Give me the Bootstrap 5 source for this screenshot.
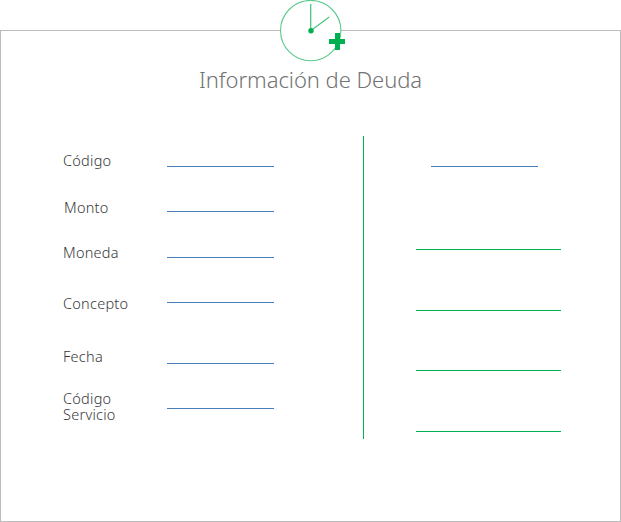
<!DOCTYPE html>
<html lang="es">
<head>
<meta charset="utf-8">
<meta name="viewport" content="width=device-width, initial-scale=1">
<title>Información de Deuda</title>
<link href="https://cdn.jsdelivr.net/npm/bootstrap@5.3.0/dist/css/bootstrap.min.css" rel="stylesheet">
<style>
body { font-family: "Noto Sans", "Open Sans", sans-serif; background: #fff; overflow: hidden; }
.page { width: 621px; height: 522px; padding-top: 30px; }
.panel { height: 492px; border: 1px solid #bcbcbc; }
.clock { top: -31px; left: 274px; }
.panel-title { padding-top: 32px; height: 105px; font-size: 22px; line-height: 32px; font-weight: 300; letter-spacing: -.05px; color: #737373; }
.labels { width: 104px; margin-left: 62px; font-size: 14.5px; line-height: 16px; font-weight: 300; letter-spacing: .25px; color: #383838; }
.labels label { height: 16px; }
.labels .indent { padding-left: 1px; }
.labels .two-lines { height: 32px; }
.fields { width: 107px; }
.rule { height: 1px; background: #4a7ebb; }
.rule-green { background: #00b050; }
.divider { width: 1px; height: 303px; margin-left: 89px; background: #00b050; }
.side { width: 145px; margin-left: 52px; }
.side .short { width: 107px; margin-left: 15px; }
.g16 { margin-top: 16px; } .g26 { margin-top: 26px; } .g29 { margin-top: 29px; }
.g30 { margin-top: 30px; } .g31 { margin-top: 31px; } .g35 { margin-top: 35px; }
.g37 { margin-top: 37px; } .g44 { margin-top: 44px; } .g45 { margin-top: 45px; }
.g59 { margin-top: 59px; } .g60 { margin-top: 60px; } .g82 { margin-top: 82px; }
</style>
</head>
<body>
<main class="page">
  <section class="panel position-relative">
    <svg class="clock position-absolute" width="76" height="66" viewBox="0 0 76 66" aria-hidden="true">
      <circle cx="35.7" cy="30.6" r="30.2" fill="#fff" stroke="#5bcb8c" stroke-width="1.1"/>
      <path d="M35.7 4v26.8L54.2 17" fill="none" stroke="#4cc782" stroke-width="1.3"/>
      <circle cx="36" cy="30.8" r="2.7" fill="#00b050"/>
      <path d="M60 33h5v6H70v5h-5v6h-5v-6H54v-5h6z" fill="#00b050"/>
    </svg>
    <h1 class="panel-title text-center mb-0">Información de Deuda</h1>
    <div class="d-flex align-items-start">
      <div class="labels d-flex flex-column">
        <label class="g16">Código</label>
        <label class="g31 indent">Monto</label>
        <label class="g29">Moneda</label>
        <label class="g35">Concepto</label>
        <label class="g37">Fecha</label>
        <label class="g26 two-lines">Código<br>Servicio</label>
      </div>
      <div class="fields d-flex flex-column">
        <div class="rule g30"></div>
        <div class="rule g44"></div>
        <div class="rule g45"></div>
        <div class="rule g44"></div>
        <div class="rule g60"></div>
        <div class="rule g44"></div>
      </div>
      <div class="divider"></div>
      <div class="side d-flex flex-column">
        <div class="rule short g30"></div>
        <div class="rule rule-green g82"></div>
        <div class="rule rule-green g60"></div>
        <div class="rule rule-green g59"></div>
        <div class="rule rule-green g60"></div>
      </div>
    </div>
  </section>
</main>
<script src="https://cdn.jsdelivr.net/npm/bootstrap@5.3.0/dist/js/bootstrap.bundle.min.js"></script>
</body>
</html>
